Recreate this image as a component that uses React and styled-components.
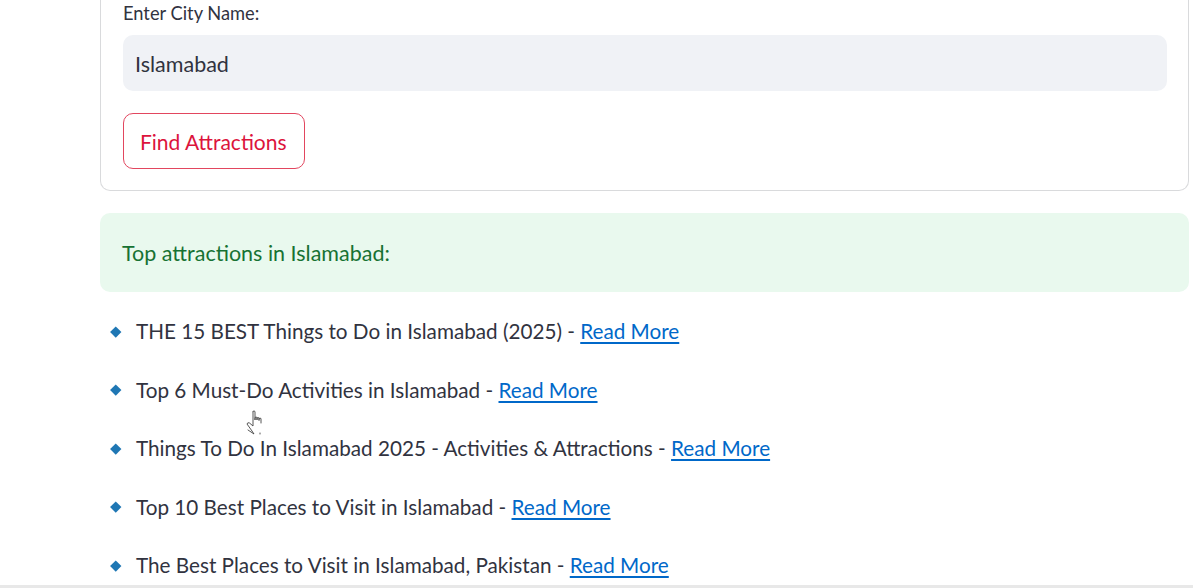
import React from "react";
import styled, { createGlobalStyle } from "styled-components";

const Global = createGlobalStyle`
  html, body { margin: 0; padding: 0; background: #ffffff; overflow: hidden; }
  body { font-family: Lato, "Noto Sans", sans-serif; color: rgb(49, 51, 63); }
`;

const Main = styled.main`
  width: 1089px;
  padding-left: 100px;
  position: relative;
`;

const Card = styled.section`
  border: 1px solid rgba(49, 51, 63, 0.18);
  border-top: none;
  border-radius: 0 0 10px 10px;
  padding: 0 21px 21px 22px;
`;

const Label = styled.label`
  display: block;
  font-size: 18.3px;
  line-height: 22px;
  padding-top: 2px;
  margin-bottom: 11px;
  color: rgb(49, 51, 63);
`;

const Input = styled.input`
  display: block;
  box-sizing: border-box;
  width: 100%;
  height: 56px;
  border: none;
  outline: none;
  border-radius: 10px;
  background: rgb(240, 242, 246);
  padding: 2px 12px 0;
  font-family: inherit;
  font-size: 21.5px;
  color: rgb(49, 51, 63);
`;

const Button = styled.button`
  margin-top: 22px;
  height: 56px;
  width: 182px;
  box-sizing: border-box;
  background: #fff;
  border: 1px solid rgb(226, 70, 95);
  border-radius: 10px;
  color: rgb(220, 20, 60);
  font-family: inherit;
  font-size: 21px;
  padding: 0 16px;
  text-align: left;
`;

const Success = styled.div`
  margin-top: 22px;
  height: 79px;
  display: flex;
  align-items: center;
  padding: 0 22px;
  border-radius: 10px;
  background: rgb(233, 249, 238);
  color: rgb(23, 114, 51);
  font-size: 21.5px;
`;

const List = styled.ul`
  list-style: none;
  margin: 25px 0 0;
  padding: 0;
  display: flex;
  flex-direction: column;
  gap: 29px;
`;

const Item = styled.li`
  position: relative;
  padding-left: 36px;
  font-size: 20.7px;
  line-height: 29.5px;
  color: rgb(49, 51, 63);

  &::before {
    content: "";
    position: absolute;
    left: 12px;
    top: 10.5px;
    width: 7.5px;
    height: 7.5px;
    background: rgb(31, 119, 180);
    transform: rotate(45deg);
  }
`;

const Link = styled.a`
  color: rgb(0, 104, 201);
  text-decoration: underline;
  text-underline-offset: 3px;
`;

const Cursor = styled.svg`
  position: absolute;
  left: 243px;
  top: 409px;
  width: 26px;
  height: 30px;
`;

const ScrollTrack = styled.div`
  position: fixed;
  left: 0;
  right: 0;
  bottom: 0;
  height: 3px;
  background: rgb(232, 232, 232);
`;

const items = [
  "THE 15 BEST Things to Do in Islamabad (2025)",
  "Top 6 Must-Do Activities in Islamabad",
  "Things To Do In Islamabad 2025 - Activities & Attractions",
  "Top 10 Best Places to Visit in Islamabad",
  "The Best Places to Visit in Islamabad, Pakistan",
];

export default function App() {
  return (
    <>
      <Global />
      <Main>
        <Card>
          <Label>Enter City Name:</Label>
          <Input defaultValue="Islamabad" />
          <Button>Find Attractions</Button>
        </Card>
        <Success>Top attractions in Islamabad:</Success>
        <List>
          {items.map((t) => (
            <Item key={t}>
              {t} - <Link href="#">Read More</Link>
            </Item>
          ))}
        </List>
        <Cursor viewBox="0 0 26 30" fill="#fff" stroke="#444" strokeWidth="0.9" strokeLinejoin="round" strokeLinecap="round">
          <path d="M10 2.5 Q11 1 12 2.5 L12 11 L12 8.5 Q13 7.5 14 8.5 L14 11 L14 9 Q15 8 16 9 L16 11.5 L16 9.5 Q17 8.7 18 9.5 L18 14" />
          <path d="M10 2.5 L10 17 L6.5 14 Q4.5 13 4 15 L9 22 L11 25 L5 21" />
          <path d="M17 24 L17 25" />
        </Cursor>
      </Main>
      <ScrollTrack />
    </>
  );
}
